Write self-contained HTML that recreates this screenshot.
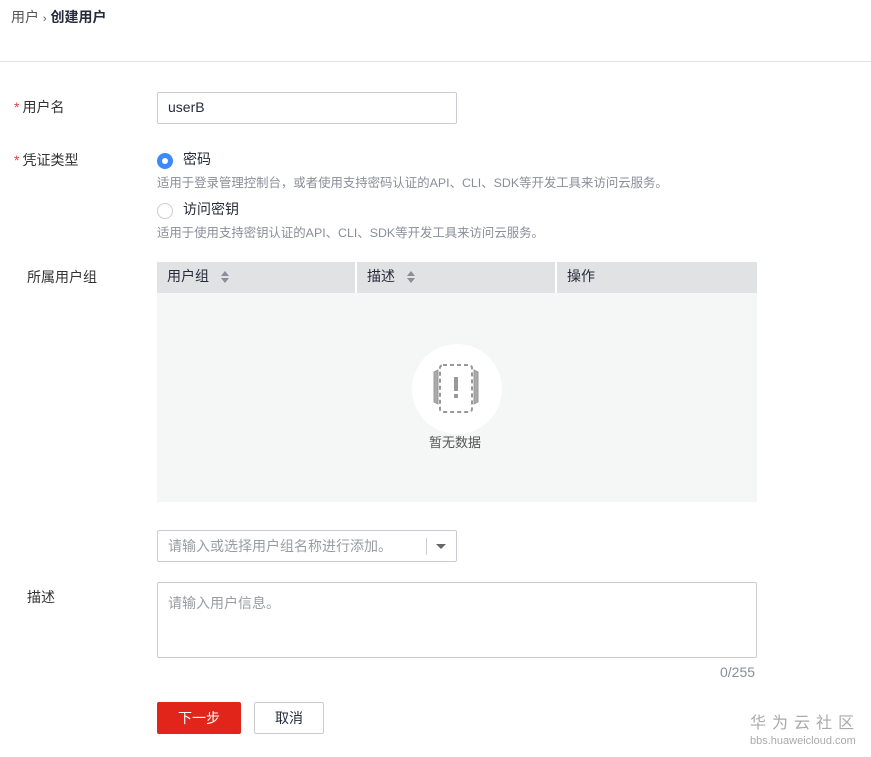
<!DOCTYPE html>
<html><head><meta charset="utf-8"><style>
*{margin:0;padding:0;box-sizing:border-box}
body{width:871px;height:757px;background:#fff;font-family:"Liberation Sans","Noto Sans CJK SC",sans-serif;color:#252b3a;font-size:14px;position:relative;overflow:hidden}
.a{position:absolute;white-space:nowrap;line-height:1.2}
.lbl{font-size:14px;color:#333}
.star{color:#e4393c;margin-right:3px}
.hint{font-size:12.4px;color:#8a8e99}
.box{position:absolute;border:1px solid #c9ccd1;border-radius:2px;background:#fff}
.ph{color:#9a9ca3;font-size:14px}
.sort{display:inline-block;width:8px;height:12px;position:relative;vertical-align:middle;margin-left:12px}
.sort:before{content:"";position:absolute;left:0;top:0;border:4px solid transparent;border-bottom:5px solid #8a8e99;border-top:0}
.sort:after{content:"";position:absolute;left:0;top:7px;border:4px solid transparent;border-top:5px solid #8a8e99;border-bottom:0}
</style></head><body>
<div class="a" style="left:11px;top:9px;font-size:14px;color:#555">用户 <span style="font-size:11px">›</span> <b style="color:#252b3a">创建用户</b></div>
<div class="a" style="left:0;top:61px;width:871px;height:1px;background:#dfe1e6"></div>

<div class="a lbl" style="left:14px;top:99px"><span class="star">*</span>用户名</div>
<div class="box" style="left:157px;top:92px;width:300px;height:32px"><span class="a" style="left:10px;top:6px;font-size:14px;color:#252b3a">userB</span></div>

<div class="a lbl" style="left:14px;top:152px"><span class="star">*</span>凭证类型</div>
<div class="a" style="left:157px;top:153px;width:16px;height:16px;border-radius:50%;background:#3d8af7"><div style="position:absolute;left:5px;top:5px;width:6px;height:6px;border-radius:50%;background:#fff"></div></div>
<div class="a" style="left:183px;top:151px;font-size:14px;color:#252b3a">密码</div>
<div class="a hint" style="left:157px;top:176px">适用于登录管理控制台，或者使用支持密码认证的API、CLI、SDK等开发工具来访问云服务。</div>
<div class="a" style="left:157px;top:203px;width:16px;height:16px;border-radius:50%;border:1px solid #c9ccd1"></div>
<div class="a" style="left:183px;top:201px;font-size:14px;color:#252b3a">访问密钥</div>
<div class="a hint" style="left:157px;top:226px">适用于使用支持密钥认证的API、CLI、SDK等开发工具来访问云服务。</div>

<div class="a lbl" style="left:27px;top:269px">所属用户组</div>
<div class="a" style="left:157px;top:262px;width:600px;height:240px;background:#f5f6f6"></div>
<div class="a" style="left:157px;top:262px;width:600px;height:31px;background:#e0e2e4"></div>
<div class="a" style="left:355px;top:262px;width:2px;height:31px;background:#fff"></div>
<div class="a" style="left:555px;top:262px;width:2px;height:31px;background:#fff"></div>
<div class="a" style="left:167px;top:268px;color:#252b3a">用户组<span class="sort"></span></div>
<div class="a" style="left:367px;top:268px;color:#252b3a">描述<span class="sort"></span></div>
<div class="a" style="left:567px;top:268px;color:#252b3a">操作</div>
<div class="a" style="left:412px;top:344px;width:90px;height:90px;border-radius:50%;background:#fff"></div>
<svg class="a" style="left:430px;top:362px" width="52" height="54" viewBox="0 0 52 54">
<path d="M8 8 L4 10 L4 40 L8 42Z M44 8 L48 10 L48 40 L44 42Z" fill="#aaa" stroke="#999"/>
<rect x="10" y="3" width="32" height="47" rx="3" fill="#fff" stroke="#999" stroke-width="2" stroke-dasharray="4 3"/>
<rect x="24" y="15" width="4" height="14" fill="#999"/><rect x="24" y="32" width="4" height="4" fill="#999"/>
</svg>
<div class="a" style="left:429px;top:435px;font-size:13px;color:#555">暂无数据</div>

<div class="box" style="left:157px;top:530px;width:300px;height:32px"><span class="a ph" style="left:10px;top:7px">请输入或选择用户组名称进行添加。</span>
<div class="a" style="left:268px;top:7px;width:1px;height:17px;background:#c9ccd1"></div>
<div class="a" style="left:278px;top:13px;border:5px solid transparent;border-top:5px solid #666;border-bottom:0"></div></div>

<div class="a lbl" style="left:27px;top:589px">描述</div>
<div class="box" style="left:157px;top:582px;width:600px;height:76px"><span class="a ph" style="left:10px;top:12px">请输入用户信息。</span></div>
<div class="a" style="left:720px;top:664px;font-size:14px;color:#8a8e99">0/255</div>

<div class="a" style="left:157px;top:702px;width:84px;height:32px;background:#e1251b;border-radius:2px;color:#fff;text-align:center;line-height:32px">下一步</div>
<div class="a" style="left:254px;top:702px;width:70px;height:32px;border:1px solid #c9ccd1;border-radius:2px;text-align:center;line-height:30px;color:#252b3a">取消</div>

<div class="a" style="left:750px;top:716px;font-size:16px;line-height:1;color:#aaa;letter-spacing:6px">华为云社区</div>
<div class="a" style="left:750px;top:736px;font-size:11px;line-height:1;color:#aaa">bbs.huaweicloud.com</div>
</body></html>
